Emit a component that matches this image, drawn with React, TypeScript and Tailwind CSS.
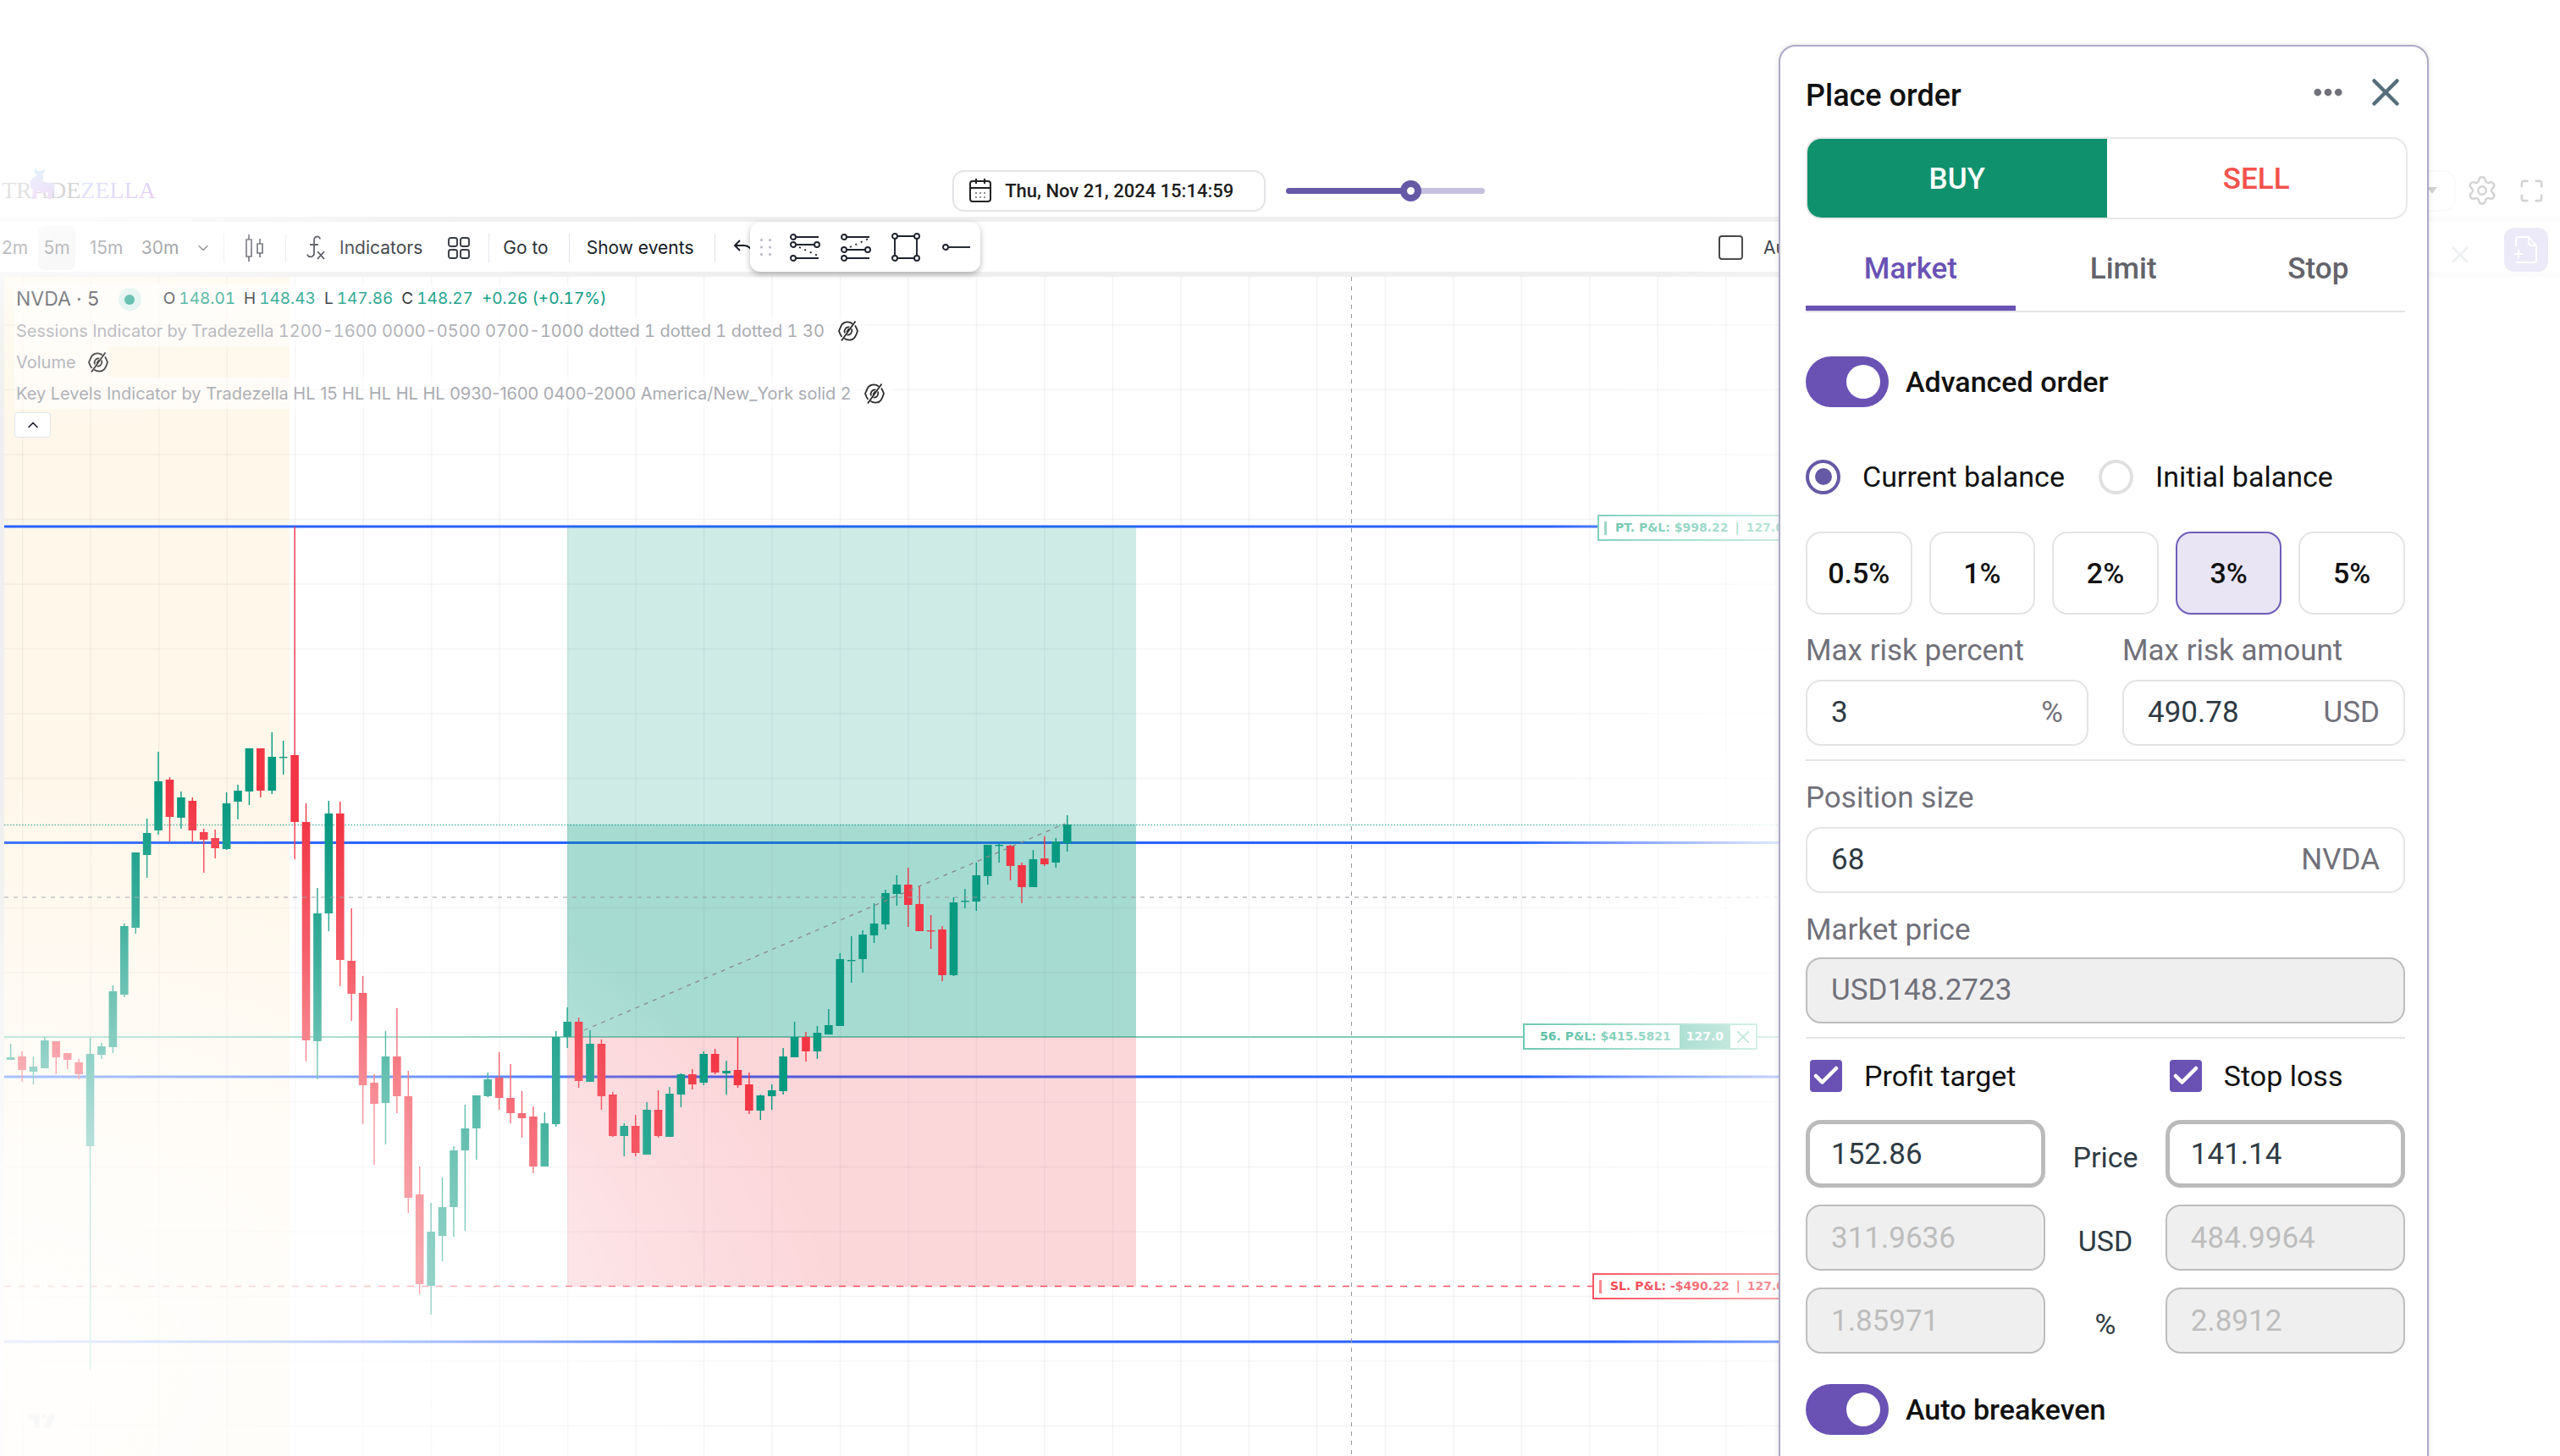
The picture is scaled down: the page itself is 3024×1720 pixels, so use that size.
import { useState } from 'react';
import type { ReactNode } from 'react';
import { Check, ChevronDown, ChevronUp, Ellipsis, Maximize, Settings, X } from 'lucide-react';

// [wick top, body top, body bottom, wick bottom, rising]
const candles: number[][] = [
  [1233, 1249, 1252, 1252, 1], [1242, 1248, 1264, 1278, 0], [1248, 1260, 1266, 1281, 1], [1225, 1229, 1262, 1262, 1],
  [1230, 1230, 1249, 1269, 0], [1244, 1244, 1252, 1263, 0], [1251, 1255, 1269, 1275, 0], [1226, 1245, 1354, 1618, 1],
  [1232, 1236, 1246, 1251, 1], [1164, 1171, 1237, 1244, 1], [1091, 1094, 1175, 1178, 1], [1007, 1007, 1096, 1103, 1],
  [967, 984, 1010, 1037, 1], [888, 923, 981, 986, 1], [918, 921, 965, 994, 0], [935, 942, 966, 979, 1],
  [942, 946, 981, 995, 0], [979, 983, 992, 1031, 0], [980, 990, 1002, 1014, 0], [936, 949, 1003, 1004, 1],
  [927, 934, 947, 968, 1], [884, 884, 935, 951, 1], [884, 884, 934, 942, 0], [865, 894, 934, 938, 1],
  [875, 894, 895, 915, 1], [622, 892, 971, 1015, 0], [949, 971, 1229, 1254, 0], [1049, 1079, 1230, 1275, 1],
  [946, 961, 1079, 1100, 1], [947, 961, 1134, 1165, 0], [1073, 1135, 1174, 1206, 0], [1153, 1173, 1282, 1328, 0],
  [1269, 1279, 1304, 1376, 0], [1218, 1248, 1303, 1352, 1], [1191, 1248, 1295, 1315, 0], [1265, 1295, 1415, 1433, 0],
  [1378, 1411, 1517, 1529, 0], [1421, 1455, 1519, 1553, 1], [1391, 1426, 1460, 1490, 1], [1354, 1359, 1426, 1461, 1],
  [1305, 1333, 1359, 1454, 1], [1294, 1294, 1333, 1370, 1], [1267, 1275, 1295, 1296, 1], [1243, 1273, 1297, 1311, 0],
  [1257, 1297, 1315, 1327, 0], [1289, 1315, 1321, 1344, 0], [1307, 1319, 1378, 1386, 0], [1314, 1327, 1378, 1378, 1],
  [1218, 1225, 1328, 1331, 1], [1190, 1207, 1225, 1238, 1], [1202, 1207, 1277, 1285, 0], [1217, 1233, 1278, 1278, 1],
  [1228, 1233, 1295, 1311, 0], [1290, 1293, 1342, 1343, 0], [1327, 1330, 1342, 1366, 1], [1317, 1330, 1362, 1366, 0],
  [1302, 1311, 1364, 1364, 1], [1288, 1311, 1342, 1344, 0], [1284, 1292, 1343, 1343, 1], [1268, 1269, 1293, 1308, 1],
  [1263, 1269, 1281, 1287, 0], [1242, 1245, 1279, 1282, 1], [1239, 1245, 1267, 1269, 0], [1253, 1265, 1268, 1293, 1],
  [1225, 1264, 1282, 1285, 0], [1267, 1281, 1312, 1316, 0], [1293, 1294, 1312, 1323, 1], [1281, 1288, 1295, 1311, 1],
  [1238, 1248, 1289, 1293, 1], [1207, 1225, 1249, 1249, 1], [1219, 1225, 1242, 1254, 0], [1212, 1220, 1242, 1251, 1],
  [1192, 1211, 1222, 1222, 1], [1126, 1133, 1212, 1212, 1], [1106, 1134, 1135, 1161, 1], [1099, 1104, 1133, 1149, 1],
  [1067, 1091, 1105, 1114, 1], [1051, 1055, 1092, 1098, 1], [1034, 1045, 1056, 1070, 1], [1025, 1045, 1069, 1095, 0],
  [1046, 1068, 1100, 1100, 0], [1081, 1099, 1100, 1121, 0], [1094, 1098, 1152, 1159, 0], [1060, 1066, 1152, 1153, 1],
  [1050, 1064, 1065, 1073, 1], [1019, 1034, 1065, 1076, 1], [998, 998, 1035, 1045, 1], [997, 998, 999, 1019, 1],
  [998, 999, 1023, 1040, 0], [1019, 1022, 1048, 1067, 0], [1004, 1015, 1048, 1048, 1], [988, 1014, 1021, 1023, 0],
  [990, 994, 1019, 1025, 1], [963, 974, 996, 1006, 1],
];

const gridX = Array.from({ length: 32 }, (_, i) => 26.8 + i * 80.48);
const gridY = Array.from({ length: 18 }, (_, i) => 384 + i * 76.5);

function Chart() {
  return (
    <svg className="absolute inset-0 h-full w-full" aria-label="NVDA 5 minute chart">
      <g transform="translate(0 -327)">
        <rect x="5" y="327" width="337" height="1393" fill="#fff7ea" />
        {gridX.map((x) => <line key={x} x1={x} x2={x} y1="327" y2="1720" stroke="#2a2e39" strokeOpacity="0.05" strokeWidth="1.5" />)}
        {gridY.map((y) => <line key={y} x1="5" x2="2900" y1={y} y2={y} stroke="#2a2e39" strokeOpacity="0.05" strokeWidth="1.5" />)}
        {[622, 995.5, 1272, 1585].map((y) => <line key={y} x1="5" x2="2600" y1={y} y2={y} stroke="#2962ff" strokeWidth="3" />)}
        <line x1="5" x2="2600" y1="1225" y2="1225" stroke="#7fcdb7" strokeWidth="2" />
        <line x1="5" x2="2600" y1="1519.5" y2="1519.5" stroke="#f7525f" strokeWidth="1.5" strokeDasharray="8 9" />
        <rect x="670" y="622" width="672" height="603" fill="#089981" fillOpacity="0.2" />
        <rect x="670" y="974" width="672" height="251" fill="#089981" fillOpacity="0.2" />
        <rect x="670" y="1225" width="672" height="295" fill="#f23645" fillOpacity="0.2" />
        <line x1="5" x2="2600" y1="974.5" y2="974.5" stroke="#089981" strokeOpacity="0.7" strokeWidth="1.5" strokeDasharray="1.5 2" />
        {candles.map(([high, top, bottom, low, up], i) => {
          const x = 12.6 + i * 13.42;
          const color = up ? '#089981' : '#f23645';
          return (
            <g key={i} fill={color}>
              <rect x={x - 0.7} y={high} width="1.4" height={low - high} />
              <rect x={x - 4.8} y={top} width="9.6" height={Math.max(bottom - top, 1.4)} />
            </g>
          );
        })}
        <line x1="690" y1="1217" x2="1258" y2="973" stroke="#888" strokeWidth="1.3" strokeDasharray="5 6" />
        <line x1="5" x2="2600" y1="1060" y2="1060" stroke="#9598a1" strokeWidth="1" strokeDasharray="5 6" />
        <line x1="1596.5" x2="1596.5" y1="327" y2="1720" stroke="#9598a1" strokeWidth="1" strokeDasharray="5 6" />
        <path d="M33 1670h14v17h-7v-10h-7zM58 1670h8l-7 17h-8z" fill="#ccc" />
        <circle cx="51.500" cy="1673.500" r="3" fill="#ccc" />
      </g>
    </svg>
  );
}

function HiddenIcon() {
  return (
    <svg className="size-6" viewBox="0 0 24 24" fill="none" stroke="#2a2a2a" strokeWidth="1.8">
      <path d="M17 3.400C13 .500 8 .800 4.800 4C3.800 5.500 2.500 8.500 1 12c1 3 2 5.200 3.500 7M7.300 20.800c4.200 2.800 9.500 2.200 12.200-1 1.200-1.700 2.500-4.600 3.500-7.800-.800-2.400-1.800-4.800-3-6.600" />
      <path d="M13.500 7.500C9.500 6.500 6.500 11 8 14.500M10.500 16.500c4 1 7-3.500 5.500-7" />
      <path d="M4 23.500 20.500.500M10.200 13.200l2.700-3.900" />
    </svg>
  );
}

function Logo() {
  return (
    <a href="#" className="relative flex items-baseline pl-0.5 font-['Liberation_Serif',serif] text-[28px] leading-8">
      <span className="text-[#555]">TRA</span>
      <span className="text-[#333]">DE</span>
      <span className="bg-gradient-to-br from-[#4a8cf0] to-[#b03ae0] bg-clip-text text-transparent">ZELLA</span>
      <svg className="absolute bottom-1 left-8 h-[40px] w-[36px]" viewBox="0 0 36 40" fill="none">
        <defs>
          <linearGradient id="bull" x1="0" y1="0" x2="0" y2="1">
            <stop offset="0" stopColor="#6fb4f2" />
            <stop offset="1" stopColor="#c05ae0" />
          </linearGradient>
        </defs>
        <path d="M12 10C8 8 7 3 11 1c-1 3 1 4 4 4 3 0 5-1 6-3 1 4-1 6-3 7 2 3 1 6 0 8 4 1 9 3 13 1 2 3 2 7 0 10l-2 10h-4l-1-8c-4 2-8 1-11-2l-3 10H6l1-11C2 25 3 18 6 14z" fill="url(#bull)" />
      </svg>
    </a>
  );
}

const divider = <span className="h-[34px] w-px shrink-0 bg-[#e0e3eb]" />;

function Toolbar() {
  return (
    <div className="relative flex h-[71px] items-center border-y-[6px] border-[#efefef] bg-white pt-0.5 text-[21px] text-[#131722]">
      <button className="w-[45px] pl-0.5 text-left">2m</button>
      <button className="h-[52px] w-11 rounded-lg bg-[#ebebeb]">5m</button>
      <button className="w-[73px]">15m</button>
      <button className="w-[54px]">30m</button>
      <button className="flex w-12 justify-center" aria-label="More intervals"><ChevronDown className="size-5" strokeWidth={1.8} /></button>
      {divider}
      <button className="flex w-[72px] justify-center" aria-label="Chart type">
        <svg className="h-8 w-6" viewBox="0 0 24 32" fill="none" stroke="currentColor" strokeWidth="1.7">
          <path d="M2 6h6v20H2zM5 0v6M5 26v6M15 11h6v11h-6zM18 5v6M18 22v5" />
        </svg>
      </button>
      {divider}
      <button className="flex items-center gap-4 pl-6">
        <svg className="h-[30px] w-[23px]" viewBox="0 0 23 30" fill="none" stroke="currentColor" strokeWidth="1.8">
          <path d="M16 4.500C15.500 0 9 .500 9 6v15c0 5-6.500 6-8 1.500M4 11h10M13 19l8 9M21 19l-8 9" />
        </svg>
        Indicators
      </button>
      <button className="pr-[22px] pl-[30px]" aria-label="Templates">
        <svg className="size-[26px]" viewBox="0 0 26 26" fill="none" stroke="currentColor" strokeWidth="1.9">
          <rect x="1" y="1" width="10" height="10" rx="2.500" />
          <rect x="15" y="1" width="10" height="10" rx="2.500" />
          <rect x="1" y="15" width="10" height="10" rx="2.500" />
          <rect x="15" y="15" width="10" height="10" rx="2.500" />
        </svg>
      </button>
      {divider}
      <button className="pr-6 pl-4">Go to</button>
      {divider}
      <button className="pr-6 pl-5">Show events</button>
      {divider}
      <button className="pl-[22px]" aria-label="Undo">
        <svg className="h-5 w-7" viewBox="0 0 28 20" fill="none" stroke="currentColor" strokeWidth="1.8">
          <path d="M7 1 1 7l6 6M1 7h11c6 0 9 4 10 11" />
        </svg>
      </button>

      <DrawingTools />

      <div className="ml-auto flex w-[994px] items-center self-stretch">
        <label className="flex items-center gap-6">
          <input type="checkbox" className="size-[29px] appearance-none rounded border-2 border-[#333]" />
          Auto
        </label>
        <button className="mr-9 ml-auto pt-4 text-[#a5b5bd]" aria-label="Close toolbar"><X className="size-8" strokeWidth={2} /></button>
        <button className="mr-3.5 flex size-[52px] items-center justify-center self-end rounded-xl bg-[#9f97dc] text-white" aria-label="New order">
          <svg className="h-8 w-7" viewBox="0 0 28 32" fill="none" stroke="currentColor" strokeWidth="1.800">
            <path d="M2 12V4q0-3 3-3h12l9 10v17q0 3-3 3H2M17 1v7q0 3 3 3h6M0 21h10M5 16v10" />
          </svg>
        </button>
      </div>
    </div>
  );
}

function DrawingTools() {
  return (
    <div className="absolute top-0 left-[886px] flex h-[59px] w-[272px] items-center rounded-xl bg-white pl-3 shadow-[0_3px_7px_rgba(0,0,0,0.28)]">
      <svg className="h-5 w-[13px]" viewBox="0 0 13 20" fill="#b2b5be">
        {[1.5, 10, 18.5].map((y) => (
          <g key={y}><circle cx="1.500" cy={y} r="1.500" /><circle cx="11.500" cy={y} r="1.500" /></g>
        ))}
      </svg>
      <button className="ml-[22px]" aria-label="Long position">
        <svg className="h-[34px] w-9" viewBox="0 0 36 34" fill="none" stroke="#1e222d" strokeWidth="1.9">
          <circle cx="4" cy="5" r="3" /><path d="M7 5h27M7 14h22M7 30h27" /><circle cx="4" cy="14" r="3" /><circle cx="32" cy="14" r="3" /><circle cx="4" cy="30" r="3" />
          <path d="M11 17l22 10" strokeDasharray="2 5" />
        </svg>
      </button>
      <button className="ml-6" aria-label="Short position">
        <svg className="h-[34px] w-9" viewBox="0 0 36 34" fill="none" stroke="#1e222d" strokeWidth="1.9">
          <circle cx="4" cy="5" r="3" /><path d="M7 5h27M7 20h22M7 30h27" /><circle cx="4" cy="20" r="3" /><circle cx="32" cy="20" r="3" /><circle cx="4" cy="30" r="3" />
          <path d="M11 17l22-10" strokeDasharray="2 5" />
        </svg>
      </button>
      <button className="ml-6" aria-label="Rectangle">
        <svg className="h-[34px] w-9" viewBox="0 0 36 34" fill="none" stroke="#1e222d" strokeWidth="1.9">
          <path d="M7 4h20M7 30h20M4 7v20M30 7v20" /><circle cx="4" cy="4" r="3" /><circle cx="30" cy="4" r="3" /><circle cx="4" cy="30" r="3" /><circle cx="30" cy="30" r="3" />
        </svg>
      </button>
      <button className="ml-6" aria-label="Horizontal ray">
        <svg className="h-[34px] w-9" viewBox="0 0 36 34" fill="none" stroke="#1e222d" strokeWidth="1.9">
          <circle cx="4" cy="17" r="3" /><path d="M7 17h26" />
        </svg>
      </button>
    </div>
  );
}

function Ohlc({ name, value }: { name: string; value: string }) {
  return <span>{name}<span className="ml-1 text-[#089981]">{value}</span></span>;
}

function Legend() {
  return (
    <div className="relative flex flex-col items-start pt-2 pl-[17px] text-[20px] text-[#a9abb1]">
      <div className="flex h-[37px] items-center gap-2.5 bg-white/60 pr-2 pl-0.5 text-[19px] text-[#131722] tabular-nums">
        <span className="mr-3 text-[23px]">NVDA · 5</span>
        <span className="mr-4 flex size-[27px] items-center justify-center rounded-full bg-[#d6efe9]"><span className="size-3 rounded-full bg-[#089981]" /></span>
        <Ohlc name="O" value="148.01" />
        <Ohlc name="H" value="148.43" />
        <Ohlc name="L" value="147.86" />
        <Ohlc name="C" value="148.27" />
        <span className="text-[#089981]">+0.26 (+0.17%)</span>
      </div>
      <div className="flex h-[37px] items-center gap-4 bg-white/60 pr-2 pl-0.5 tabular-nums">
        Sessions Indicator by Tradezella 1200-1600 0000-0500 0700-1000 dotted 1 dotted 1 dotted 1 30 <HiddenIcon />
      </div>
      <div className="flex h-[37px] items-center gap-3.5 bg-white/60 pl-0.5">Volume <HiddenIcon /></div>
      <div className="flex h-[37px] items-center gap-4 bg-white/60 pr-2 pl-0.5">
        Key Levels Indicator by Tradezella HL 15 HL HL HL HL 0930-1600 0400-2000 America/New_York solid 2 <HiddenIcon />
      </div>
      <button className="mt-1 flex h-[30px] w-[43px] items-center justify-center rounded border border-[#e0e3eb] bg-white text-[#131722]" aria-label="Hide legend">
        <ChevronUp className="size-5" />
      </button>
    </div>
  );
}

function OrderLines() {
  return (
    <div className="font-['DejaVu_Sans',sans-serif] text-[14px] font-bold">
      <div className="absolute top-[281px] left-[1887px] flex h-[31px] items-center border-2 border-[#6cc9b0] bg-white pl-1.5 text-[#4fbb9e]">
        <span className="mr-2.5 h-4 border-l-[3px] border-[#4fbb9e]/70" />
        PT. P&amp;L: $998.22 <span className="mx-2">|</span> 127.0
      </div>
      <div className="absolute top-[882px] left-[1799px] flex h-[31px] items-stretch border-2 border-[#6cc9b0] bg-white text-[#4fbb9e]">
        <span className="flex items-center pr-2.5 pl-[18px]">56. P&amp;L: $415.5821</span>
        <span className="flex items-center bg-[#5cc0a5] px-2 text-white">127.0</span>
        <button className="px-[3px]" aria-label="Close position"><X className="size-6" strokeWidth={2} /></button>
      </div>
      <div className="absolute top-[1177px] left-[1881px] flex h-[31px] items-center border-2 border-[#f7525f] bg-white pl-1.5 text-[#f23645]">
        <span className="mr-2.5 h-4 border-l-[3px] border-[#f7525f]/70" />
        SL. P&amp;L: -$490.22 <span className="mx-2">|</span> 127.0
      </div>
    </div>
  );
}

function Toggle({ children }: { children: ReactNode }) {
  return (
    <label className="flex items-center gap-5 font-medium">
      <input
        type="checkbox"
        role="switch"
        defaultChecked
        className="flex h-[60px] w-[98px] appearance-none items-center rounded-full bg-[#b9b9c4] px-2.5 before:size-10 before:rounded-full before:bg-white checked:justify-end checked:bg-[#6952b4]"
      />
      {children}
    </label>
  );
}

function CheckField({ children }: { children: ReactNode }) {
  return (
    <label className="flex items-center gap-[26px] pl-[5px]">
      <span className="grid size-[38px]">
        <input type="checkbox" defaultChecked className="peer col-start-1 row-start-1 appearance-none rounded border-2 border-[#6952b4] checked:bg-[#6952b4]" />
        <Check className="pointer-events-none invisible col-start-1 row-start-1 size-9 place-self-center text-white peer-checked:visible" strokeWidth={3} />
      </span>
      {children}
    </label>
  );
}

function Field({ id, label, value, suffix }: { id: string; label: string; value: string; suffix: string }) {
  return (
    <div>
      <label htmlFor={id} className="block text-[35px] leading-10 text-[#71717a]">{label}</label>
      <div className="mt-3.5 flex h-[78px] items-center rounded-[18px] border-2 border-[#e4e4e7] px-7 text-[35px]">
        <input id={id} defaultValue={value} className="w-full min-w-0 flex-1 text-[#2f3b44] outline-none" />
        <span className="text-[#71717a]">{suffix}</span>
      </div>
    </div>
  );
}

const targetInput = 'h-[78px] min-w-0 rounded-[18px] border-2 border-[#bdbdbd] bg-[#efefef] px-7 text-[35px] text-[#bdbdbd]';
const priceInput = 'h-20 min-w-0 rounded-[18px] border-[5px] border-[#bbb] bg-white px-[25px] text-[35px] text-[#2f3b44]';

const tabs = [
  { name: 'Market', width: 'w-[35%]' },
  { name: 'Limit', width: 'w-[36%]' },
  { name: 'Stop', width: 'w-[29%]' },
];

function OrderPanel() {
  const [risk, setRisk] = useState('3%');
  const [tab, setTab] = useState('Market');

  return (
    <aside className="absolute top-[53px] right-[155px] z-20 w-[768px] rounded-[20px] border-2 border-[#acaac6] bg-white pr-[26px] pb-16 pl-[30px] font-['Roboto',sans-serif] text-[34px] leading-10 text-[#111] shadow-[0_0_6px_rgba(0,0,0,0.12)]">
      <div className="flex h-[107px] items-center">
        <h2 className="flex-1 pt-2 text-[36px] font-medium">Place order</h2>
        <button className="mr-5 text-[#71717a]" aria-label="More options"><Ellipsis className="size-[42px]" strokeWidth={3} fill="currentColor" /></button>
        <button className="-mr-1 text-[#546e7a]" aria-label="Close"><X className="size-[54px]" strokeWidth={2} /></button>
      </div>

      <div className="-mr-[3px] grid h-[97px] grid-cols-2 overflow-hidden rounded-[18px] border-2 border-[#e8e8e8] text-[35px] font-medium">
        <button className="bg-[#10916d] pt-0.5 text-white">BUY</button>
        <button className="pt-0.5 text-[#f5524c]">SELL</button>
      </div>

      <div className="flex h-[110px] border-b-2 border-[#e4e4e7] text-[35px] font-medium" role="tablist">
        {tabs.map(({ name, width }) => (
          <button
            key={name}
            role="tab"
            onClick={() => setTab(name)}
            className={`${width} border-b-[6px] pt-4 ${tab === name ? 'border-[#6952b4] text-[#6952b4]' : 'border-transparent text-[#63636b]'}`}
          >
            {name}
          </button>
        ))}
      </div>

      <div className="mt-[52px]"><Toggle>Advanced order</Toggle></div>

      <div className="mt-[61px] flex h-[42px] items-center gap-10">
        {['Current balance', 'Initial balance'].map((name, i) => (
          <label key={name} className="flex items-center gap-[26px]">
            <input
              type="radio"
              name="balance"
              defaultChecked={i === 0}
              className="flex size-[41px] appearance-none items-center justify-center rounded-full border-4 border-[#e0e0e0] checked:border-[#6558a5] checked:before:size-5 checked:before:rounded-full checked:before:bg-[#6558a5]"
            />
            {name}
          </label>
        ))}
      </div>

      <div className="mt-11 grid grid-cols-5 gap-5">
        {['0.5%', '1%', '2%', '3%', '5%'].map((p) => (
          <button
            key={p}
            onClick={() => setRisk(p)}
            className={`h-[98px] rounded-[18px] border-2 font-medium ${risk === p ? 'border-[#6f5cb8] bg-[#e9e5f5]' : 'border-[#e4e4e7]'}`}
          >
            {p}
          </button>
        ))}
      </div>

      <div className="mt-[23px] grid grid-cols-2 gap-10">
        <Field id="risk-percent" label="Max risk percent" value="3" suffix="%" />
        <Field id="risk-amount" label="Max risk amount" value="490.78" suffix="USD" />
      </div>
      <hr className="mt-4 mb-6 border-t-2 border-[#e4e4e7]" />
      <Field id="position-size" label="Position size" value="68" suffix="NVDA" />

      <label htmlFor="market-price" className="mt-6 block text-[35px] leading-10 text-[#71717a]">Market price</label>
      <div className="mt-3 flex h-[78px] items-center rounded-[18px] border-2 border-[#bdbdbd] bg-[#efefef] px-7 text-[35px] text-[#71717a]">
        USD
        <input id="market-price" defaultValue="148.2723" disabled className="min-w-0 flex-1" />
      </div>
      <hr className="mt-4 mb-6 border-t-2 border-[#e4e4e7]" />

      <div className="grid grid-cols-[2fr_1fr_2fr] items-center gap-y-5">
        <CheckField>Profit target</CheckField>
        <span />
        <CheckField>Stop loss</CheckField>
      </div>
      <div className="mt-8 grid grid-cols-[2fr_1fr_2fr] items-center gap-y-5 text-center text-[#2f3b44]">
        <input aria-label="Profit target price" defaultValue="152.86" className={priceInput} />
        <span className="pt-2">Price</span>
        <input aria-label="Stop loss price" defaultValue="141.14" className={priceInput} />
        <input aria-label="Profit target USD" defaultValue="311.9636" disabled className={targetInput} />
        <span className="pt-2">USD</span>
        <input aria-label="Stop loss USD" defaultValue="484.9964" disabled className={targetInput} />
        <input aria-label="Profit target percent" defaultValue="1.85971" disabled className={targetInput} />
        <span className="pt-2">%</span>
        <input aria-label="Stop loss percent" defaultValue="2.8912" disabled className={targetInput} />
      </div>

      <div className="mt-9"><Toggle>Auto breakeven</Toggle></div>
    </aside>
  );
}

export default function App() {
  return (
    <div className="relative flex h-screen flex-col overflow-hidden bg-white font-['Inter',sans-serif]">
      <header className="flex items-center pt-[194px]">
        <div className="flex h-[62px] flex-[8] items-center"><Logo /></div>
        <div className="flex items-center gap-6 pr-1 font-['Roboto',sans-serif]">
          <button className="flex h-[49px] w-[370px] items-center gap-4 rounded-[14px] border-2 border-[#e4e4e7] pl-[18px] text-[22px] font-medium text-[#1c1c1c]">
            <svg className="h-7 w-[26px]" viewBox="0 0 26 28" fill="none" stroke="#222" strokeWidth="2">
              <rect x="1" y="3" width="24" height="24" rx="3" />
              <path d="M1 11h24M8 0v6M18 0v6" />
              <path d="M7 17h14M7 22h14" strokeDasharray="2 3" strokeOpacity="0.5" />
            </svg>
            Thu, Nov 21, 2024 15:14:59
          </button>
          <input
            type="range"
            aria-label="Replay speed"
            defaultValue={64}
            className="h-[7px] w-[235px] appearance-none rounded-full bg-linear-to-r from-[#6558a5] from-60% to-[#c5c0de] to-60% [&::-webkit-slider-thumb]:size-[25px] [&::-webkit-slider-thumb]:appearance-none [&::-webkit-slider-thumb]:rounded-full [&::-webkit-slider-thumb]:border-8 [&::-webkit-slider-thumb]:border-[#6558a5] [&::-webkit-slider-thumb]:bg-white"
          />
        </div>
        <div className="flex flex-[9] items-center justify-end text-[#222]">
          <button className="mr-3 flex h-[49px] w-40 items-center justify-end rounded-[14px] border-2 border-[#e4e4e7] pr-5" aria-label="Layouts">
            <svg className="h-2 w-3" viewBox="0 0 12 8"><path d="M0 0h12L6 8z" fill="currentColor" /></svg>
          </button>
          <button className="mr-6" aria-label="Settings"><Settings className="size-[38px]" strokeWidth={1.5} /></button>
          <button className="mr-[18px]" aria-label="Full screen"><Maximize className="size-[31px]" strokeWidth={2} /></button>
        </div>
      </header>

      <Toolbar />

      <main className="relative flex-1 border-l-[5px] border-[#efefef]">
        <div className="absolute inset-y-0 right-0 -left-[5px]">
          <Chart />
          <OrderLines />
        </div>
        <div className="-ml-[5px]"><Legend /></div>
        <div className="absolute inset-y-0 right-0 w-[920px] bg-linear-to-r from-transparent to-white to-75%" />
      </main>

      {/* soft vignette that fades the workspace out at its edges */}
      <div className="pointer-events-none absolute inset-0 z-10 bg-[radial-gradient(1000px_700px_at_0_1620px,rgb(255_255_255/0.93),rgb(255_255_255/0.75)_35%,rgb(255_255_255/0.6)_50%,rgb(255_255_255/0.42)_65%,rgb(255_255_255/0.2)_80%,transparent)]" />
      <div className="pointer-events-none absolute inset-0 z-10 bg-[radial-gradient(800px_300px_at_0_220px,rgb(255_255_255/0.85),rgb(255_255_255/0.68)_30%,rgb(255_255_255/0.45)_45%,rgb(255_255_255/0.22)_60%,transparent)]" />
      <div className="pointer-events-none absolute inset-0 z-10 bg-[radial-gradient(520px_900px_at_2300px_1000px,rgb(255_255_255/0.95),rgb(255_255_255/0.85)_38%,rgb(255_255_255/0.7)_50%,rgb(255_255_255/0.38)_75%,transparent)]" />
      <div className="pointer-events-none absolute inset-y-0 right-0 z-10 w-[900px] bg-linear-to-r from-transparent to-white/80 to-75%" />

      <OrderPanel />
    </div>
  );
}
